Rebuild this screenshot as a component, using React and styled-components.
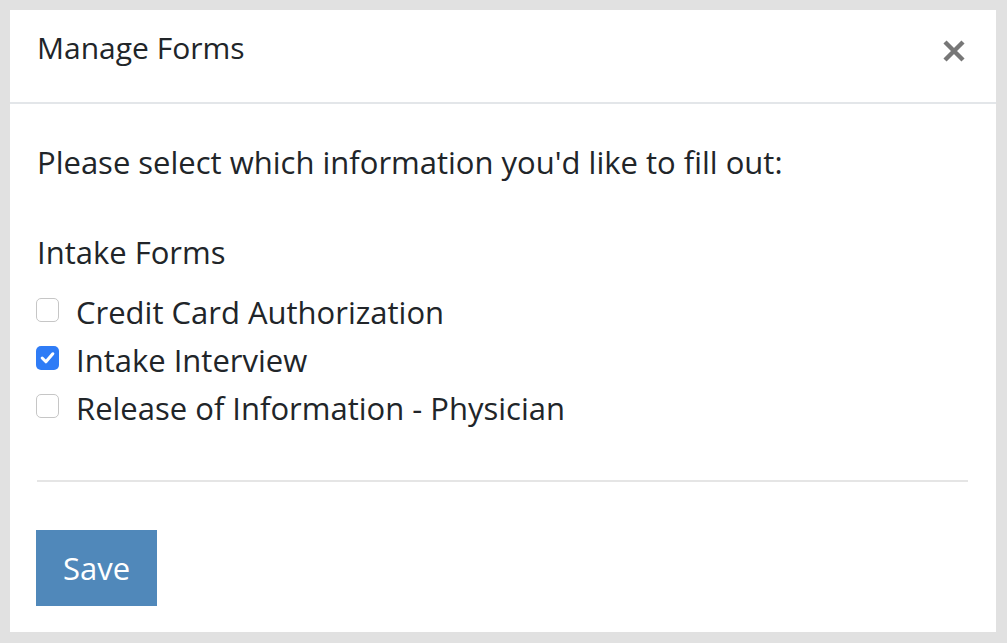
import React, { useState } from "react";
import styled, { createGlobalStyle } from "styled-components";

const GlobalStyle = createGlobalStyle`
  html, body {
    margin: 0;
    padding: 0;
    background: #e1e1e1;
  }
  body {
    font-family: "Open Sans", "Noto Sans", sans-serif;
    color: #212529;
  }
`;

// Gray page frame
const Page = styled.div`
  width: 1007px;
  height: 643px;
  box-sizing: border-box;
  padding: 10px 11px 11px 10px;
  display: flex;
`;

// Modal panel
const Panel = styled.div`
  flex: 1;
  background: #fff;
  display: flex;
  flex-direction: column;
`;

const Header = styled.div`
  height: 94px;
  box-sizing: border-box;
  padding: 20px 27px 0 27px;
  border-bottom: 2px solid #e3e6e9;
  display: flex;
  justify-content: space-between;
  align-items: flex-start;
`;

const Title = styled.h2`
  margin: 0;
  font-size: 30px;
  font-weight: 400;
  line-height: 36px;
  color: #212529;
`;

const CloseButton = styled.button`
  border: none;
  background: none;
  padding: 0;
  margin: 9px 3px 0 0;
  width: 24px;
  height: 24px;
  display: flex;
  align-items: center;
  justify-content: center;
  cursor: pointer;
`;

const Body = styled.div`
  padding: 39px 28px 26px 27px;
  display: flex;
  flex-direction: column;
`;

const Intro = styled.p`
  margin: 0;
  font-size: 31px;
  line-height: 38px;
`;

const SectionTitle = styled.div`
  margin-top: 52px;
  font-size: 31px;
  line-height: 38px;
`;

const List = styled.div`
  margin-top: 17px;
  display: flex;
  flex-direction: column;
`;

const Row = styled.label`
  height: 48px;
  display: flex;
  align-items: center;
  gap: 17px;
  font-size: 31px;
  cursor: pointer;
`;

const Box = styled.span`
  width: 23px;
  height: 24px;
  box-sizing: border-box;
  margin: -5px 0 0 -1px;
  border-radius: 5px;
  border: ${(p) => (p.checked ? "none" : "1px solid #c6c6c6")};
  background: ${(p) => (p.checked ? "#2f7cf6" : "#fff")};
  display: flex;
  align-items: center;
  justify-content: center;
  flex-shrink: 0;
`;

const Divider = styled.hr`
  margin: 48px 0 48px 0;
  border: none;
  border-top: 2px solid #e5e5e5;
`;

const SaveButton = styled.button`
  align-self: flex-start;
  margin-left: -1px;
  width: 121px;
  height: 76px;
  padding: 0;
  border: none;
  border-radius: 0;
  background: #5088ba;
  color: #fff;
  font-family: inherit;
  font-size: 31px;
  cursor: pointer;
`;

const forms = [
  { id: 1, name: "Credit Card Authorization", checked: false },
  { id: 2, name: "Intake Interview", checked: true },
  { id: 3, name: "Release of Information - Physician", checked: false },
];

const App = () => {
  const [items, setItems] = useState(forms);

  const toggle = (id) =>
    setItems(items.map((f) => (f.id === id ? { ...f, checked: !f.checked } : f)));

  return (
    <Page>
      <GlobalStyle />
      <Panel>
        <Header>
          <Title>Manage Forms</Title>
          <CloseButton aria-label="Close">
            <svg width="24" height="24" viewBox="0 0 24 24">
              <path d="M3 3 L21 21 M21 3 L3 21" stroke="#777" strokeWidth="4.4" strokeLinecap="butt" />
            </svg>
          </CloseButton>
        </Header>
        <Body>
          <Intro>Please select which information you'd like to fill out:</Intro>
          <SectionTitle>Intake Forms</SectionTitle>
          <List>
            {items.map((f) => (
              <Row key={f.id} onClick={() => toggle(f.id)}>
                <Box checked={f.checked}>
                  {f.checked && (
                    <svg width="17" height="17" viewBox="0 0 16 16">
                      <path d="M3 8.5 L6.5 12 L13 4.5" fill="none" stroke="#fff" strokeWidth="2.9" strokeLinecap="round" strokeLinejoin="round" />
                    </svg>
                  )}
                </Box>
                {f.name}
              </Row>
            ))}
          </List>
          <Divider />
          <SaveButton>Save</SaveButton>
        </Body>
      </Panel>
    </Page>
  );
};

export default App;
